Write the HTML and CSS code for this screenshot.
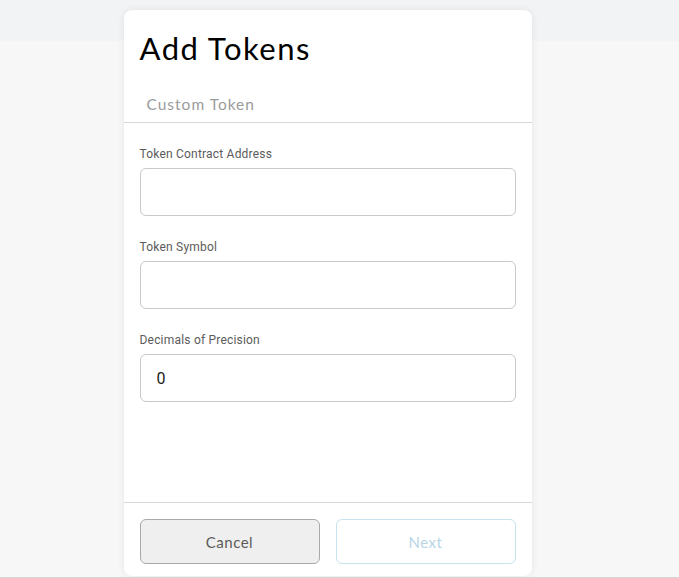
FILE: index.html
```html
<!DOCTYPE html>
<html lang="en">
<head>
  <meta charset="UTF-8">
  <title>Add Tokens</title>
  <link rel="stylesheet" href="styles.css">
</head>
<body>

  <div class="top-band"></div>

  <div class="page">
    <div class="add-token">
      <div class="add-token__header">
        <h1 class="add-token__title">Add Tokens</h1>
        <div class="add-token__tabs">
          <span class="add-token__tab">Custom Token</span>
        </div>
      </div>

      <div class="add-token__content">
        <div class="field">
          <label class="field__label" for="address">Token Contract Address</label>
          <input class="field__input" type="text" id="address">
        </div>
        <div class="field">
          <label class="field__label" for="symbol">Token Symbol</label>
          <input class="field__input" type="text" id="symbol">
        </div>
        <div class="field">
          <label class="field__label" for="decimals">Decimals of Precision</label>
          <input class="field__input" type="number" id="decimals" value="0">
        </div>
      </div>

      <div class="add-token__footer">
        <button class="btn btn--cancel">Cancel</button>
        <button class="btn btn--next" disabled>Next</button>
      </div>
    </div>
  </div>

</body>
</html>
```

FILE: styles.css
```css
* {
  box-sizing: border-box;
}

body {
  margin: 0;
  padding: 0;
  font-family: Roboto, 'Liberation Sans', sans-serif;
  background: #f7f7f7;
  height: 578px;
  overflow: hidden;
  position: relative;
  border-bottom: 1px solid #d6d6d6;
}

.top-band {
  height: 41px;
  background: #f2f3f4;
}

.page {
  position: absolute;
  top: 10px;
  left: 0;
  right: 0;
  display: flex;
  justify-content: center;
}

.add-token {
  width: 408px;
  margin-left: -24px;
  height: 566px;
  background: white;
  border-radius: 8px;
  box-shadow: 0 0 7px rgba(0, 0, 0, 0.08);
  display: flex;
  flex-direction: column;
}

.add-token__header {
  padding: 18px 16px 0;
  border-bottom: 1px solid #d8d8d8;
}

.add-token__title {
  margin: 0;
  font-family: Lato, sans-serif;
  font-weight: 400;
  font-size: 31px;
  letter-spacing: 1.5px;
  line-height: 40px;
  color: #000;
}

.add-token__tabs {
  margin-top: 26px;
  padding: 0 7px 8px;
}

.add-token__tab {
  font-family: Lato, sans-serif;
  font-size: 15.5px;
  letter-spacing: 1px;
  color: #9b9b9b;
  line-height: 20px;
}

.add-token__content {
  flex: 1;
  padding: 24px 16px 0;
  display: flex;
  flex-direction: column;
  gap: 24px;
}

.field {
  display: flex;
  flex-direction: column;
}

.field__label {
  font-size: 12px;
  letter-spacing: 0.2px;
  line-height: 14px;
  color: #5b5b5b;
  margin-bottom: 7px;
}

.field__input {
  height: 48px;
  border: 1px solid #c9c9c9;
  border-radius: 6px;
  padding: 0 16px;
  font-family: Roboto, sans-serif;
  font-size: 16px;
  color: #1b1b1b;
  outline: none;
  -moz-appearance: textfield;
}

.field__input::-webkit-inner-spin-button,
.field__input::-webkit-outer-spin-button {
  -webkit-appearance: none;
  margin: 0;
}

.add-token__footer {
  border-top: 1px solid #d8d8d8;
  padding: 16px 16px 0;
  height: 74px;
  display: flex;
  gap: 16px;
}

.btn {
  flex: 1;
  height: 45px;
  border-radius: 6px;
  font-family: Lato, sans-serif;
  font-size: 15px;
  letter-spacing: 0.5px;
  background: white;
  cursor: pointer;
}

.btn--cancel {
  background: #efefef;
  border: 1px solid #a9a9a9;
  color: #5b5b5b;
}

.btn--next {
  border: 1px solid #c6e3ee;
  color: #b8d6e6;
  cursor: default;
}
```
